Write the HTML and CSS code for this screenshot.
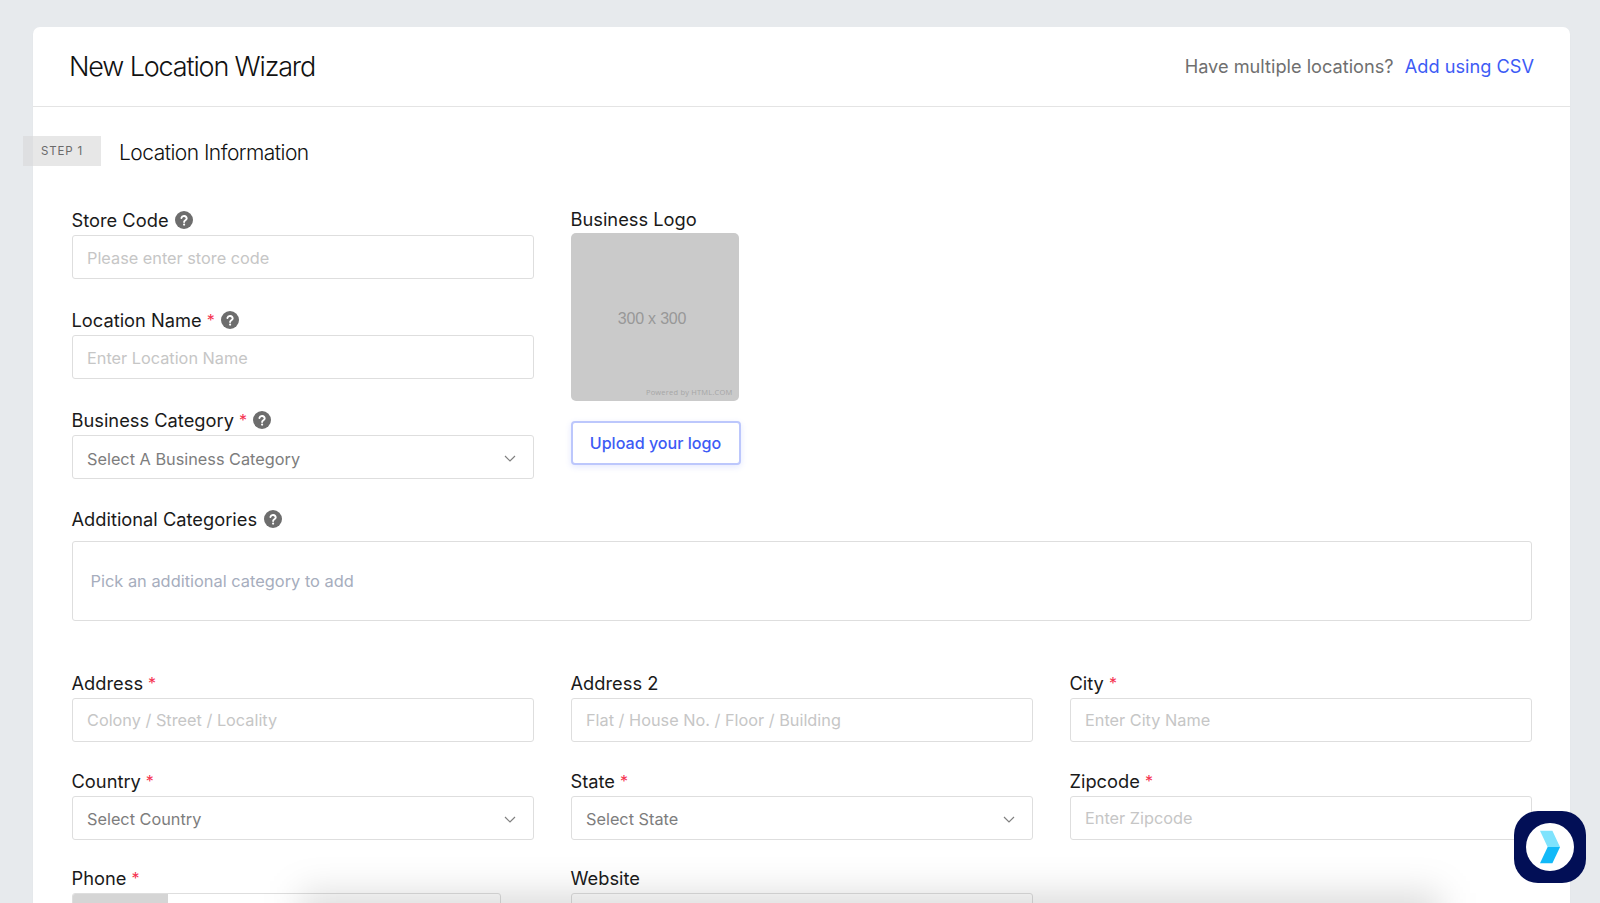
FILE: index.html
```html
<!DOCTYPE html>
<html lang="en">
<head>
<meta charset="utf-8">
<title>New Location Wizard</title>
<link rel="stylesheet" href="styles.css">
</head>
<body>
<main class="card">
  <header class="card-head">
    <h1 class="title">New Location Wizard</h1>
    <p class="csv">Have multiple locations? <a class="csv-link" href="#">Add using CSV</a></p>
  </header>
  <section class="step">
    <span class="step-badge">STEP 1</span>
    <h2 class="step-title">Location Information</h2>
  </section>
  <form class="form">
    <div class="top-row">
      <div class="col">
        <div class="field">
          <label class="label">Store Code <svg class="help" viewBox="0 0 18 18"><circle cx="9" cy="9" r="9"/><path d="M6.4 7a2.7 2.7 0 0 1 5.3.4c0 1.8-2.6 1.9-2.6 3.6"/><circle class="dot" cx="9.1" cy="13.6" r="1.1"/></svg></label>
          <div class="input ph">Please enter store code</div>
        </div>
        <div class="field">
          <label class="label">Location Name <span class="req">*</span> <svg class="help" viewBox="0 0 18 18"><circle cx="9" cy="9" r="9"/><path d="M6.4 7a2.7 2.7 0 0 1 5.3.4c0 1.8-2.6 1.9-2.6 3.6"/><circle class="dot" cx="9.1" cy="13.6" r="1.1"/></svg></label>
          <div class="input ph">Enter Location Name</div>
        </div>
        <div class="field">
          <label class="label">Business Category <span class="req">*</span> <svg class="help" viewBox="0 0 18 18"><circle cx="9" cy="9" r="9"/><path d="M6.4 7a2.7 2.7 0 0 1 5.3.4c0 1.8-2.6 1.9-2.6 3.6"/><circle class="dot" cx="9.1" cy="13.6" r="1.1"/></svg></label>
          <div class="input select">Select A Business Category<svg class="chev" viewBox="0 0 12 7"><path d="M1 1l5 5 5-5"/></svg></div>
        </div>
      </div>
      <div class="logo-col">
        <div class="label logo-label">Business Logo</div>
        <div class="logo">
          <span class="logo-size">300 x 300</span>
          <span class="logo-credit">Powered by HTML.COM</span>
        </div>
        <button type="button" class="upload">Upload your logo</button>
      </div>
    </div>
    <div class="additional">
      <label class="label">Additional Categories <svg class="help" viewBox="0 0 18 18"><circle cx="9" cy="9" r="9"/><path d="M6.4 7a2.7 2.7 0 0 1 5.3.4c0 1.8-2.6 1.9-2.6 3.6"/><circle class="dot" cx="9.1" cy="13.6" r="1.1"/></svg></label>
      <div class="multi">Pick an additional category to add</div>
    </div>
    <div class="grid">
      <div class="cell"><label class="label">Address <span class="req">*</span></label><div class="input ph">Colony / Street / Locality</div></div>
      <div class="cell"><label class="label">Address 2</label><div class="input ph">Flat / House No. / Floor / Building</div></div>
      <div class="cell"><label class="label">City <span class="req">*</span></label><div class="input ph">Enter City Name</div></div>
      <div class="cell"><label class="label">Country <span class="req">*</span></label><div class="input select">Select Country<svg class="chev" viewBox="0 0 12 7"><path d="M1 1l5 5 5-5"/></svg></div></div>
      <div class="cell"><label class="label">State <span class="req">*</span></label><div class="input select">Select State<svg class="chev" viewBox="0 0 12 7"><path d="M1 1l5 5 5-5"/></svg></div></div>
      <div class="cell"><label class="label">Zipcode <span class="req">*</span></label><div class="input ph">Enter Zipcode</div></div>
      <div class="cell"><label class="label">Phone <span class="req">*</span></label><div class="input phone"><span class="addon"></span></div></div>
      <div class="cell"><label class="label">Website</label><div class="input"></div></div>
    </div>
  </form>
</main>
<div class="bottom-shade"></div>
<div class="widget">
  <div class="widget-disc">
    <svg class="widget-mark" viewBox="0 0 22 34"><path class="mark-top" d="M0 0h13l8 17H8z"/><path class="mark-bottom" d="M8 17h13l-8 17H0z"/></svg>
  </div>
</div>
</body>
</html>
```
FILE: styles.css
```css
* { box-sizing: border-box; }
html, body { height: 903px; overflow: hidden; }
body {
  margin: 0;
  padding: 27px 30px 0 33px;
  background: #e7eaed;
  font-family: Inter, "Liberation Sans", sans-serif;
  color: #1a1a1a;
  position: relative;
}
.card {
  background: #fff;
  border-radius: 7px 7px 0 0;
  height: 876px;
  box-shadow: 0 1px 2px rgba(0,0,0,.03);
}
.card-head {
  height: 80px;
  border-bottom: 1px solid #e4e4e4;
  display: flex;
  align-items: center;
  justify-content: space-between;
  padding: 0 36px;
}
.title {
  margin: 0;
  font-size: 27px;
  font-weight: 300;
  letter-spacing: -1.15px;
  color: #111;
}
.csv { margin: 0 0 2px; font-size: 18.2px; color: #6f6f6f; }
.csv-link { color: #3d5bf5; text-decoration: none; margin-left: 6px; }
.step {
  display: flex;
  align-items: center;
  height: 30px;
  margin: 29px 0 0 -10px;
}
.step-badge {
  width: 78px;
  height: 30px;
  background: linear-gradient(90deg, #dedfe1 10px, #e7e7e7 10px);
  color: #6a6a6a;
  font-size: 11.5px;
  letter-spacing: .8px;
  display: flex;
  align-items: center;
  justify-content: center;
  padding-bottom: 1px;
}
.step-title {
  margin: 2px 0 0 18px;
  font-size: 21px;
  font-weight: 300;
  letter-spacing: -.53px;
  color: #111;
}
.form { padding: 0 38.5px; }
.top-row { display: flex; gap: 36.5px; margin-top: 43px; align-items: flex-start; }
.col { width: 462.5px; display: flex; flex-direction: column; gap: 30px; }
.label {
  display: flex;
  align-items: center;
  gap: 5px;
  height: 26px;
  font-size: 18.3px;
  color: #1a1a1a;
}
.field .label { padding-bottom: 4.5px; }
.req { color: #f5324f; font-size: 16px; }
.help { width: 18px; height: 18px; margin-left: 1.5px; fill: #6d6d6d; flex: none; }
.help path { fill: none; stroke: #fff; stroke-width: 1.9; stroke-linecap: round; }
.help .dot { fill: #fff; }
.input {
  height: 44px;
  border: 1.5px solid #dedede;
  border-radius: 3px;
  background: #fff;
  padding: 0 14.5px;
  display: flex;
  align-items: center;
  font-size: 16.3px;
}
.ph { color: #c6c6c6; }
.field .ph { padding-top: 1px; }
.select { color: #7d7d7d; justify-content: space-between; padding: 3px 17px 0 14.5px; }
.chev { width: 12px; height: 7px; fill: none; stroke: #808080; stroke-width: 1.2; }
.logo-col { width: 170px; margin-top: -2px; }
.logo-col .logo-label { padding-bottom: 2px; }
.logo {
  width: 168px;
  height: 168px;
  border-radius: 5px;
  background: #cacaca;
  position: relative;
  display: flex;
  align-items: center;
  justify-content: center;
}
.logo-size {
  color: #989898;
  font-size: 16px;
  letter-spacing: -.2px;
  font-family: "Liberation Sans", sans-serif;
  margin: 4px 5px 0 0;
}
.logo-credit {
  position: absolute;
  right: 6px;
  bottom: 4px;
  font-size: 7.5px;
  letter-spacing: .2px;
  color: #a6a6a6;
  font-family: "Open Sans", sans-serif;
}
.upload {
  display: block;
  width: 170px;
  height: 44px;
  margin-top: 20px;
  background: #fff;
  border: 2px solid #bcc7fc;
  border-radius: 4px;
  color: #3d5bf5;
  font: 500 16.1px Inter, "Liberation Sans", sans-serif;
  box-shadow: 0 2px 6px rgba(61,91,245,.14);
  padding: 0;
}
.additional { margin-top: 27px; }
.additional .label { margin-bottom: 9px; }
.multi {
  height: 80px;
  border: 1.5px solid #dedede;
  border-radius: 3px;
  padding: 0 18px;
  display: flex;
  align-items: center;
  color: #a6adbd;
  font-size: 16.4px;
}
.grid {
  display: grid;
  grid-template-columns: repeat(3, 462.5px);
  column-gap: 36.5px;
  row-gap: 26.5px;
  margin-top: 50px;
}
.cell .label { margin-bottom: 1px; padding-bottom: 2px; }
.phone { width: 429px; padding: 0; overflow: hidden; }
.addon { width: 95px; height: 100%; background: #d5d5d5; }
.bottom-shade {
  position: absolute;
  left: 300px;
  right: 160px;
  top: 893px;
  height: 60px;
  background: rgba(0,0,0,.14);
  filter: blur(18px);
}
.widget {
  position: absolute;
  left: 1514px;
  top: 811px;
  width: 72px;
  height: 72px;
  border-radius: 24px;
  background: #020f56;
  display: flex;
  align-items: center;
  justify-content: center;
}
.widget-disc {
  width: 48px;
  height: 48px;
  border-radius: 50%;
  background: #fff;
  display: flex;
  align-items: center;
  justify-content: center;
}
.widget-mark { width: 21px; height: 34px; }
.mark-top { fill: #7fe3fd; }
.mark-bottom { fill: #12b9f8; }
```
